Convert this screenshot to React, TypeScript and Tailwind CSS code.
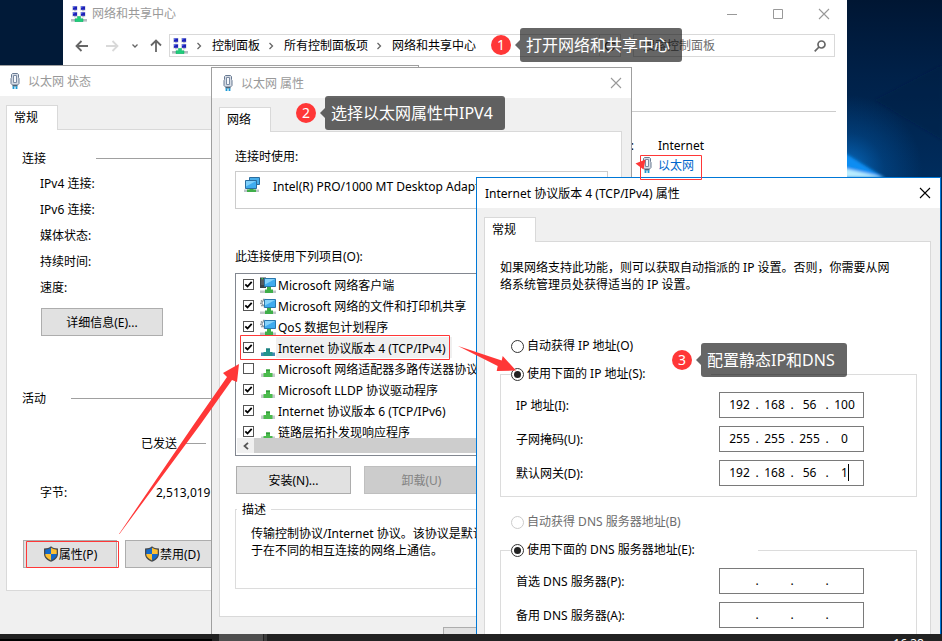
/**
 * Windows 10 desktop walkthrough: setting a static IPv4 address in three steps.
 */
import React from 'react';

const CHECK_ITEMS = [
  { label: 'Microsoft 网络客户端', icon: 'client', checked: true },
  { label: 'Microsoft 网络的文件和打印机共享', icon: 'service', checked: true },
  { label: 'QoS 数据包计划程序', icon: 'service', checked: true },
  { label: 'Internet 协议版本 4 (TCP/IPv4)', icon: 'protocol', checked: true, selected: true },
  { label: 'Microsoft 网络适配器多路传送器协议', icon: 'protocol', checked: false },
  { label: 'Microsoft LLDP 协议驱动程序', icon: 'protocol', checked: true },
  { label: 'Internet 协议版本 6 (TCP/IPv6)', icon: 'protocol', checked: true },
  { label: '链路层拓扑发现响应程序', icon: 'protocol', checked: true },
];

const IP_ROWS = [
  { id: 'ip', label: 'IP 地址(I):', value: ['192', '168', '56', '100'] },
  { id: 'mask', label: '子网掩码(U):', value: ['255', '255', '255', '0'] },
  { id: 'gateway', label: '默认网关(D):', value: ['192', '168', '56', '1'], caret: true },
];

const DNS_ROWS = [
  { id: 'dns1', label: '首选 DNS 服务器(P):', value: ['', '', '', ''] },
  { id: 'dns2', label: '备用 DNS 服务器(A):', value: ['', '', '', ''] },
];

const STATUS_LABELS = ['IPv4 连接:', 'IPv6 连接:', '媒体状态:', '持续时间:', '速度:'];
const CRUMBS = ['控制面板', '所有控制面板项', '网络和共享中心'];

/* ── Icons ── */

function NetworkCenterIcon() {
  return (
    <svg viewBox="0 0 16 16" className="size-4 shrink-0" aria-hidden="true">
      {[[1, 0], [9, 0], [1, 6], [9, 6]].map(([x, y]) => (
        <g key={`${x}-${y}`}>
          <rect x={x} y={y} width="5.5" height="4.4" fill="#c9cede" />
          <rect x={x + 1} y={y + 0.4} width="4" height="3.4" fill="#1c20b8" />
          <rect x={x + 1} y={y + 0.4} width="1.4" height="1.2" fill="#6f86ff" />
          <rect x={x + 2} y={y + 4.4} width="2.4" height="0.8" fill="#a2a7b3" />
        </g>
      ))}
      <rect x="0" y="13" width="16" height="2.6" fill="#b5bcc2" />
      <path d="M6.4 10.5h3.2v2.2h2.4v3H4v-3h2.4z" fill="#1fce7b" stroke="#0fae62" strokeWidth=".5" />
    </svg>
  );
}

function PlugIcon() {
  return (
    <svg viewBox="0 0 16 16" className="size-4 shrink-0" aria-hidden="true">
      <path d="M4.500 1.500 5.500.500h5l1 1V4.500l.5 1v5l-1.500 1.500h-5L4 10.500v-5l.5-1z" fill="#d5dbe4" stroke="#697a92" />
      <path d="M6.500 2.500h3v7h-3z" fill="#f6f8fb" stroke="#7b8ba2" />
      <path d="M5.500 12h5v1.500h-5z" fill="#4d6478" />
      <path d="M6.500 13.200V16M9.500 13.200V16" stroke="#1b9ad6" strokeWidth="1.800" />
    </svg>
  );
}

function AdapterIcon() {
  return (
    <svg viewBox="0 0 16 16" className="size-4 shrink-0" aria-hidden="true">
      <path d="M5.500 1.500h10v7h-10z" fill="#49aeea" stroke="#2a6d9f" />
      <path d="M0 13.500h15V16H0z" fill="#bcc4c9" />
      <path d="M5.500 11.500h4v2H12V16H3v-2.500h2.500z" fill="#3fae49" />
      <path d="M1.500 4.500h11v8h-11z" fill="#3facf0" stroke="#2a6d9f" />
      <path d="M2 5h10L2 10.500z" fill="#7fd0fb" />
    </svg>
  );
}

function ItemIcon({ kind, selected }: { kind: string; selected?: boolean }) {
  return (
    <svg viewBox="0 0 16 16" className="size-4 shrink-0" aria-hidden="true">
      {kind === 'client' && (
        <g>
          <path d="M0 .500h6v10.500H0z" fill="#3c4247" />
          <path d="M1 3h4M1 5h4M1 7h4" stroke="#7d878e" strokeWidth=".8" />
          <path d="M1.500 1H3v1.200H1.500z" fill="#32d04a" />
        </g>
      )}
      {kind === 'service' && (
        <g fill="none" stroke="#8b969e">
          <circle cx="4.500" cy="5" r="3.600" strokeWidth="1.800" strokeDasharray="1.400 1.100" />
          <circle cx="4.500" cy="5" r="2.500" strokeWidth="1.200" />
        </g>
      )}
      {kind !== 'protocol' && (
        <g>
          <path d="M0 13.500h16V16H0z" fill="#c0c5c9" />
          <path d="M7 10h4v2.500h2V16H5v-3.500h2z" fill="#3fae49" />
          <path d="M4.500 1.500h11v8h-11z" fill="#3fabef" stroke="#2a77ac" />
          <path d="M5 2h10L5 7.500z" fill="#86d3fb" />
        </g>
      )}
      {kind === 'protocol' && (
        <g>
          <path d="M1 12.500h14V16H1z" fill={selected ? '#4589b4' : '#c6cacd'} />
          <path d="M6 8.500h4v3.500h2.500v4h-9v-4H6z" fill={selected ? '#24948d' : '#4bbb4d'} />
          <path d="M6 8.500h4V10H6z" fill={selected ? '#1c7f80' : '#329a3a'} />
        </g>
      )}
    </svg>
  );
}

function ShieldIcon() {
  return (
    <svg viewBox="0 0 16 16" className="size-4 shrink-0" aria-hidden="true">
      <path d="M8 .3C6.500 1.800 4 2.500 1 2.500V8c0 3.800 3.200 6.200 7 7.800 3.800-1.600 7-4 7-7.800V2.500C12 2.500 9.500 1.800 8 .3z" fill="#46494c" />
      <path d="M8 1.800V8H2.300V3.700Q6 3.500 8 1.800z" fill="#1569c7" />
      <path d="M8 1.800V8h5.700V3.700Q10 3.500 8 1.800z" fill="#fdc032" />
      <path d="M8 8v6.400C5 13 2.300 11.200 2.300 8z" fill="#fdc032" />
      <path d="M8 8v6.400c3-1.400 5.700-3.200 5.700-6.400z" fill="#1569c7" />
    </svg>
  );
}

function CloseIcon() {
  return (
    <svg viewBox="0 0 12 12" className="size-3" aria-hidden="true">
      <path d="m1 1 10 10M11 1 1 11" stroke="currentColor" strokeWidth="1.100" fill="none" />
    </svg>
  );
}

/* ── Shared pieces ── */

function TitleBar({ title, icon, active, closable }: { title: string; icon?: React.ReactNode; active?: boolean; closable?: boolean }) {
  return (
    <header className={`flex h-[30px] shrink-0 items-center gap-[5px] bg-white pl-2 ${active ? 'text-black' : 'text-[#999]'}`}>
      {icon}
      <h2 className="flex-1">{title}</h2>
      {closable && (
        <button type="button" aria-label="关闭" className="grid h-full w-[30px] place-content-center">
          <CloseIcon />
        </button>
      )}
    </header>
  );
}

function Tab({ children }: { children: React.ReactNode }) {
  return (
    <button type="button" role="tab" aria-selected="true" className="relative -mb-px h-[25px] w-[52px] shrink-0 border border-b-0 border-[#d9d9d9] bg-white pb-0.5 pl-[7px] text-left">
      {children}
    </button>
  );
}

function WinButton({ className = '', disabled, children }: { className?: string; disabled?: boolean; children: React.ReactNode }) {
  return (
    <button
      type="button"
      disabled={disabled}
      className={`flex h-7 shrink-0 items-center justify-center border border-[#adadad] bg-[#e1e1e1] disabled:border-[#bfbfbf] disabled:bg-[#ccc] disabled:text-[#838383] ${className}`}
    >
      {children}
    </button>
  );
}

function Radio({ name, label, checked, disabled }: { name: string; label: string; checked?: boolean; disabled?: boolean }) {
  return (
    <label className={`flex h-[17px] items-center gap-[3px] ${disabled ? 'text-[#6d6d6d]' : ''}`}>
      <input
        type="radio"
        name={name}
        defaultChecked={checked}
        disabled={disabled}
        className="grid size-[13px] shrink-0 appearance-none place-content-center rounded-full border border-[#333] bg-white before:size-[7px] before:rounded-full checked:before:bg-[#222] disabled:border-[#ccc]"
      />
      <span className="pb-0.5">{label}</span>
    </label>
  );
}

type IpRow = { id: string; label: string; value: string[]; caret?: boolean };

function IpField({ id, label, value, caret }: IpRow) {
  return (
    <div className="grid grid-cols-[203px_145px] items-center">
      <label htmlFor={id}>{label}</label>
      <div className="relative flex h-[26px] items-center border border-[#7a7a7a] bg-white pb-0.5 pl-[5px]">
        {value.map((part, i) => (
          <React.Fragment key={i}>
            {i > 0 && <span className="w-1.5 text-center">.</span>}
            <input
              id={i === 0 ? id : undefined}
              aria-label={i === 0 ? undefined : `${label} ${i + 1}`}
              defaultValue={part}
              className="w-[29px] bg-transparent text-center outline-none"
            />
          </React.Fragment>
        ))}
        {caret && <span className="absolute right-3.5 h-[17px] w-px bg-black" />}
      </div>
    </div>
  );
}

function Step({ n, text, className }: { n: number; text: string; className: string }) {
  return (
    <div className={`absolute flex items-center whitespace-nowrap text-white ${className}`}>
      <span className="grid size-5 place-content-center rounded-full bg-[#ff3737] text-sm">{n}</span>
      <svg viewBox="0 0 5 10" className="ml-1 h-2.5 w-[5px]" aria-hidden="true">
        <path d="M5 0v10L0 5z" fill="#000" fillOpacity=".6" />
      </svg>
      <p className="h-[34px] rounded-[3px] bg-black/60 pr-3 pl-1.5 text-base leading-[34px]">{text}</p>
    </div>
  );
}

/* ── Windows ── */

function NetworkCenterWindow() {
  return (
    <section className="absolute top-0 left-[63px] h-[400px] w-[784px] bg-white">
      <header className="flex h-[27px] items-center pl-2 text-[#999]">
        <NetworkCenterIcon />
        <h2 className="flex-1 pl-[5px]">网络和共享中心</h2>
        <button type="button" aria-label="最小化" className="grid h-full w-[46px] place-content-center">
          <svg viewBox="0 0 12 12" className="size-3"><path d="M1 6.500h10" stroke="currentColor" /></svg>
        </button>
        <button type="button" aria-label="最大化" className="grid h-full w-[46px] place-content-center">
          <svg viewBox="0 0 12 12" className="size-3"><path d="M1.500 1.500h9v9h-9z" fill="none" stroke="currentColor" /></svg>
        </button>
        <button type="button" aria-label="关闭" className="grid h-full w-[46px] place-content-center">
          <CloseIcon />
        </button>
      </header>

      <nav className="mt-[7px] flex h-[23px] items-center pr-3 pl-1 text-[#666]">
        <button type="button" aria-label="后退" className="grid w-[30px] place-content-center">
          <svg viewBox="0 0 14 14" className="size-3.5"><path d="M13 7H1.500M6.500 2l-5 5 5 5" fill="none" stroke="currentColor" strokeWidth="1.800" /></svg>
        </button>
        <button type="button" aria-label="前进" className="grid w-[30px] place-content-center text-[#d9d9d9]">
          <svg viewBox="0 0 14 14" className="size-3.5"><path d="M1 7h11.500M7.500 2l5 5-5 5" fill="none" stroke="currentColor" strokeWidth="1.800" /></svg>
        </button>
        <button type="button" aria-label="最近位置" className="grid w-4 place-content-center">
          <svg viewBox="0 0 6 6" className="size-1.5"><path d="m.5 1.500 2.500 2.500 2.500-2.500" fill="none" stroke="currentColor" strokeWidth="1.300" /></svg>
        </button>
        <button type="button" aria-label="上移" className="grid w-[26px] place-content-center">
          <svg viewBox="0 0 14 14" className="size-3.5"><path d="M7 13V1.500M2 6.500l5-5 5 5" fill="none" stroke="currentColor" strokeWidth="1.800" /></svg>
        </button>

        <div className="flex h-full flex-1 items-center border border-[#d9d9d9] pl-0.5 text-black">
          <NetworkCenterIcon />
          {CRUMBS.map((crumb) => (
            <React.Fragment key={crumb}>
              <svg viewBox="0 0 24 8" className="h-2 w-6 shrink-0" aria-hidden="true">
                <path d="m9.500 1 3 3-3 3" fill="none" stroke="#666" strokeWidth="1.300" />
              </svg>
              <a href="#" className="shrink-0">{crumb}</a>
            </React.Fragment>
          ))}
          <button type="button" aria-label="刷新" className="ml-auto grid h-full w-[21px] place-content-center border-l border-[#d9d9d9]">
            <svg viewBox="0 0 12 12" className="size-3"><path d="M10.500 6A4.500 4.500 0 1 1 8.500 2.300M8 0v3.300h3.300" fill="none" stroke="#555" strokeWidth="1.500" /></svg>
          </button>
        </div>

        <label className="ml-3 flex h-full w-[202px] items-center border border-[#d9d9d9] pr-2 pl-[9px]">
          <input type="text" placeholder="搜索控制面板" aria-label="搜索控制面板" className="min-w-0 flex-1 outline-none placeholder:text-[#6d6d6d]" />
          <svg viewBox="0 0 12 12" className="size-3"><path d="M7.500 1a3.500 3.500 0 1 1 0 7 3.500 3.500 0 0 1 0-7zM5 7 .7 11.300" fill="none" stroke="#666" strokeWidth="1.700" /></svg>
        </label>
      </nav>

      <hr className="mt-[54px] mr-[11px] border-[#ccc]" />

      <div className="mt-[25px] grid grid-cols-[571px_1fr]">
        <span className="h-[18px] text-right leading-[18px]">访问类型:</span>
        <span className="h-[18px] pl-6 leading-[18px]">Internet</span>
        <span />
        <a href="#" className="flex h-5 items-center gap-[3px] pl-[5px] text-[#0066cc]">
          <PlugIcon />
          以太网
        </a>
      </div>
    </section>
  );
}

function StatusWindow() {
  return (
    <section className="absolute top-[65px] bottom-0 -left-0.5 flex w-[421px] flex-col border border-[#9f9f9f] bg-[#f0f0f0]">
      <TitleBar title="以太网 状态" icon={<PlugIcon />} />
      <div className="mr-[9px] ml-[7px] flex flex-col pt-[9px]">
        <Tab>常规</Tab>
        <div className="border border-[#d9d9d9] bg-white pb-[22px]">
          <div className="flex items-center pt-5 pl-[15px]">
            <h3 className="w-[74px]">连接</h3>
            <hr className="flex-1 border-[#a0a0a0]" />
          </div>
          <ul className="mt-1 pl-[33px] leading-[26px]">
            {STATUS_LABELS.map((label) => <li key={label}>{label}</li>)}
          </ul>
          <WinButton className="mt-[7px] ml-[34px] w-[122px]">详细信息(E)...</WinButton>

          <div className="mt-[54px] flex items-center pl-[15px]">
            <h3 className="w-[49px]">活动</h3>
            <hr className="flex-1 border-[#a0a0a0]" />
          </div>
          <div className="mt-7 flex items-center gap-[5px] pl-[134px]">
            <span>已发送</span>
            <hr className="w-6 border-[#a0a0a0]" />
          </div>
          <div className="mt-8 flex pl-[33px]">
            <span className="w-[116px]">字节:</span>
            <span>2,513,019</span>
          </div>
          <div className="mt-[39px] flex gap-2 pl-4">
            <WinButton className="w-[94px]"><ShieldIcon />属性(P)</WinButton>
            <WinButton className="w-[94px]"><ShieldIcon />禁用(D)</WinButton>
          </div>
        </div>
      </div>
    </section>
  );
}

function PropertiesWindow() {
  return (
    <section className="absolute top-[67px] bottom-0 left-[211px] flex w-[421px] flex-col overflow-hidden border border-[#9f9f9f] bg-[#f0f0f0]">
      <TitleBar title="以太网 属性" icon={<PlugIcon />} closable />
      <div className="mr-[9px] ml-[7px] flex flex-col pt-[9px]">
        <Tab>网络</Tab>
        <div className="border border-[#d9d9d9] bg-white pt-4 pr-[13px] pb-[27px] pl-[15px]">
          <p>连接时使用:</p>
          <div className="mt-1.5 flex h-[38px] gap-[13px] border border-[#ccc] pt-1 pl-2">
            <AdapterIcon />
            <span className="mt-0.5 whitespace-nowrap">Intel(R) PRO/1000 MT Desktop Adapter</span>
          </div>

          <p className="mt-[39px]">此连接使用下列项目(O):</p>
          <div className="mt-2 border border-[#828790] px-px pb-0.5">
            <ul className="h-[164px] overflow-hidden">
              {CHECK_ITEMS.map(({ label, icon, checked, selected }) => (
                <li key={label}>
                  <label className="flex h-[21px] items-center pl-1.5 whitespace-nowrap">
                    <span className="relative mr-1.5 size-[11px] shrink-0">
                      <input type="checkbox" defaultChecked={checked} className="peer block size-[11px] appearance-none border border-[#555] bg-white" />
                      <svg viewBox="0 0 11 11" className="pointer-events-none absolute inset-0 hidden peer-checked:block" aria-hidden="true">
                        <path d="m2.300 5.300 2.200 2.200 4.200-4.700" fill="none" stroke="#000" strokeWidth="1.800" />
                      </svg>
                    </span>
                    <ItemIcon kind={icon} selected={selected} />
                    <span className={selected ? 'bg-[#f0f0f0] pt-[3px] pr-1.5 pb-px pl-0.5' : 'pt-0.5 pl-0.5'}>{label}</span>
                  </label>
                </li>
              ))}
            </ul>
            <div className="flex h-[15px] bg-[#f0f0f0]">
              <button type="button" aria-label="向左滚动" className="grid w-[17px] place-content-center">
                <svg viewBox="0 0 8 8" className="size-2"><path d="M6 .8 2.500 4 6 7.200" fill="none" stroke="#555" strokeWidth="1.800" /></svg>
              </button>
              <div className="flex-1 bg-[#cdcdcd]" />
            </div>
          </div>

          <div className="mt-2.5 flex gap-[13px] pl-px">
            <WinButton className="w-[115px]">安装(N)...</WinButton>
            <WinButton className="w-[115px]" disabled>卸载(U)</WinButton>
          </div>

          <fieldset className="mt-[7px] h-[88px] border border-[#dcdcdc] pl-[15px] whitespace-nowrap">
            <legend className="-ml-3.5 px-[5px]">描述</legend>
            <p className="mt-[7px]">
              传输控制协议/Internet 协议。该协议是默认的
              <br />
              于在不同的相互连接的网络上通信。
            </p>
          </fieldset>
        </div>
        <div className="mt-2.5 flex gap-2 pl-56">
          <WinButton className="w-[75px]">确定</WinButton>
        </div>
      </div>
    </section>
  );
}

function Ipv4Window() {
  return (
    <section className="absolute top-[177px] bottom-0 left-[476px] flex w-[465px] flex-col border border-[#0078d7] bg-[#f0f0f0]">
      <TitleBar title="Internet 协议版本 4 (TCP/IPv4) 属性" active closable />
      <div className="mr-[9px] ml-[7px] flex flex-1 flex-col pt-[9px]">
        <Tab>常规</Tab>
        <form className="flex-1 border border-b-0 border-[#d9d9d9] bg-white pt-[17px] pr-[13px] pl-[15px]">
          <p className="whitespace-nowrap">
            如果网络支持此功能，则可以获取自动指派的 IP 设置。否则，你需要从网
            <br />
            络系统管理员处获得适当的 IP 设置。
          </p>

          <div className="mt-[45px] pl-[11px]">
            <Radio name="ip-mode" label="自动获得 IP 地址(O)" />
          </div>
          <fieldset className="mt-[11px] border border-[#dcdcdc] pb-2.5 pl-[15px]">
            <legend className="-ml-[5px] w-[200px]">
              <Radio name="ip-mode" label="使用下面的 IP 地址(S):" checked />
            </legend>
            <div className="mt-[9px] flex flex-col gap-2">
              {IP_ROWS.map((row) => <IpField key={row.id} {...row} />)}
            </div>
          </fieldset>

          <div className="mt-[17px] pl-[11px]">
            <Radio name="dns-mode" label="自动获得 DNS 服务器地址(B)" disabled />
          </div>
          <fieldset className="mt-[11px] border border-[#dcdcdc] pb-2.5 pl-[15px]">
            <legend className="-ml-[5px] w-[247px]">
              <Radio name="dns-mode" label="使用下面的 DNS 服务器地址(E):" checked />
            </legend>
            <div className="mt-[9px] flex flex-col gap-2">
              {DNS_ROWS.map((row) => <IpField key={row.id} {...row} />)}
            </div>
          </fieldset>
        </form>
      </div>
    </section>
  );
}

/* ── Desktop ── */

function Wallpaper() {
  return (
    <svg className="absolute top-0 right-0 h-full w-[95px]" viewBox="0 0 95 641" preserveAspectRatio="none" aria-hidden="true">
      <defs>
        <linearGradient id="sky" x1="0" y1="0" x2="0" y2="1">
          <stop offset="0" stopColor="#001633" />
          <stop offset=".12" stopColor="#002149" />
          <stop offset=".27" stopColor="#002c5c" />
          <stop offset="1" stopColor="#00204a" />
        </linearGradient>
        <radialGradient id="glow" cx="0" cy="170" r="75" gradientUnits="userSpaceOnUse">
          <stop offset="0" stopColor="#0a80e0" stopOpacity=".8" />
          <stop offset=".5" stopColor="#0567bd" stopOpacity=".3" />
          <stop offset="1" stopColor="#0567bd" stopOpacity="0" />
        </radialGradient>
        <filter id="soft" x="-20%" y="-20%" width="140%" height="140%">
          <feGaussianBlur stdDeviation="1.500" />
        </filter>
      </defs>
      <path d="M0 0h95v641H0z" fill="url(#sky)" />
      <path d="M95 65 28 100l67 40z" fill="#001b40" fillOpacity=".3" filter="url(#soft)" />
      <path d="M0 60h95v140H0z" fill="url(#glow)" />
      <g filter="url(#soft)">
        <path d="M-4 152 38 178H-4z" fill="#0b8df2" />
        <path d="M-4 168 38 177.500H-4z" fill="#b8ecff" />
      </g>
    </svg>
  );
}

function Annotations() {
  return (
    <>
      <svg className="pointer-events-none absolute top-0 left-0 h-[641px] w-[942px]" viewBox="0 0 942 641" aria-hidden="true">
        <g fill="none" stroke="#ff3737">
          <path d="M640.500 155.500h61v24h-61z" />
          <path d="M240.500 335.500h209v24h-209z" />
          <path d="M26.500 541.500h92v26h-92z" />
        </g>
        <g fill="#ff3737">
          <path d="M119 534 193.500 425 227 377l-4-4 16-9-2 18-5-2-32 45-80.500 109z" />
          <path d="m458 346 43.700 14.500 1-4.500L516 370.500l-19.300.500 1-5z" />
          <path d="m635.500 163.500 10-4-2 10z" />
        </g>
      </svg>
      <Step n={1} text="打开网络和共享中心" className="top-7 left-[491px]" />
      <Step n={2} text="选择以太网属性中IPV4" className="top-24 left-[296px]" />
      <Step n={3} text="配置静态IP和DNS" className="top-[343px] left-[672px]" />
    </>
  );
}

export default function App() {
  return (
    <main className="relative h-screen w-full overflow-hidden bg-[#011a38] font-['Noto_Sans','Noto_Sans_CJK_SC',sans-serif] text-xs leading-[17px] text-black">
      <Wallpaper />
      <NetworkCenterWindow />
      <StatusWindow />
      <PropertiesWindow />
      <Ipv4Window />

      <footer className="absolute inset-x-0 bottom-0 flex h-[7px] overflow-hidden bg-[#222]">
        <div className="w-[212px] border-b-2 border-black" />
        <div className="ml-[7px] w-11 bg-[#4e4e4e]" />
        <div className="ml-px w-[3px] bg-[#3c3c3c]" />
        <time className="mt-px mr-[18px] ml-auto text-white">16:38</time>
      </footer>

      <Annotations />
    </main>
  );
}
